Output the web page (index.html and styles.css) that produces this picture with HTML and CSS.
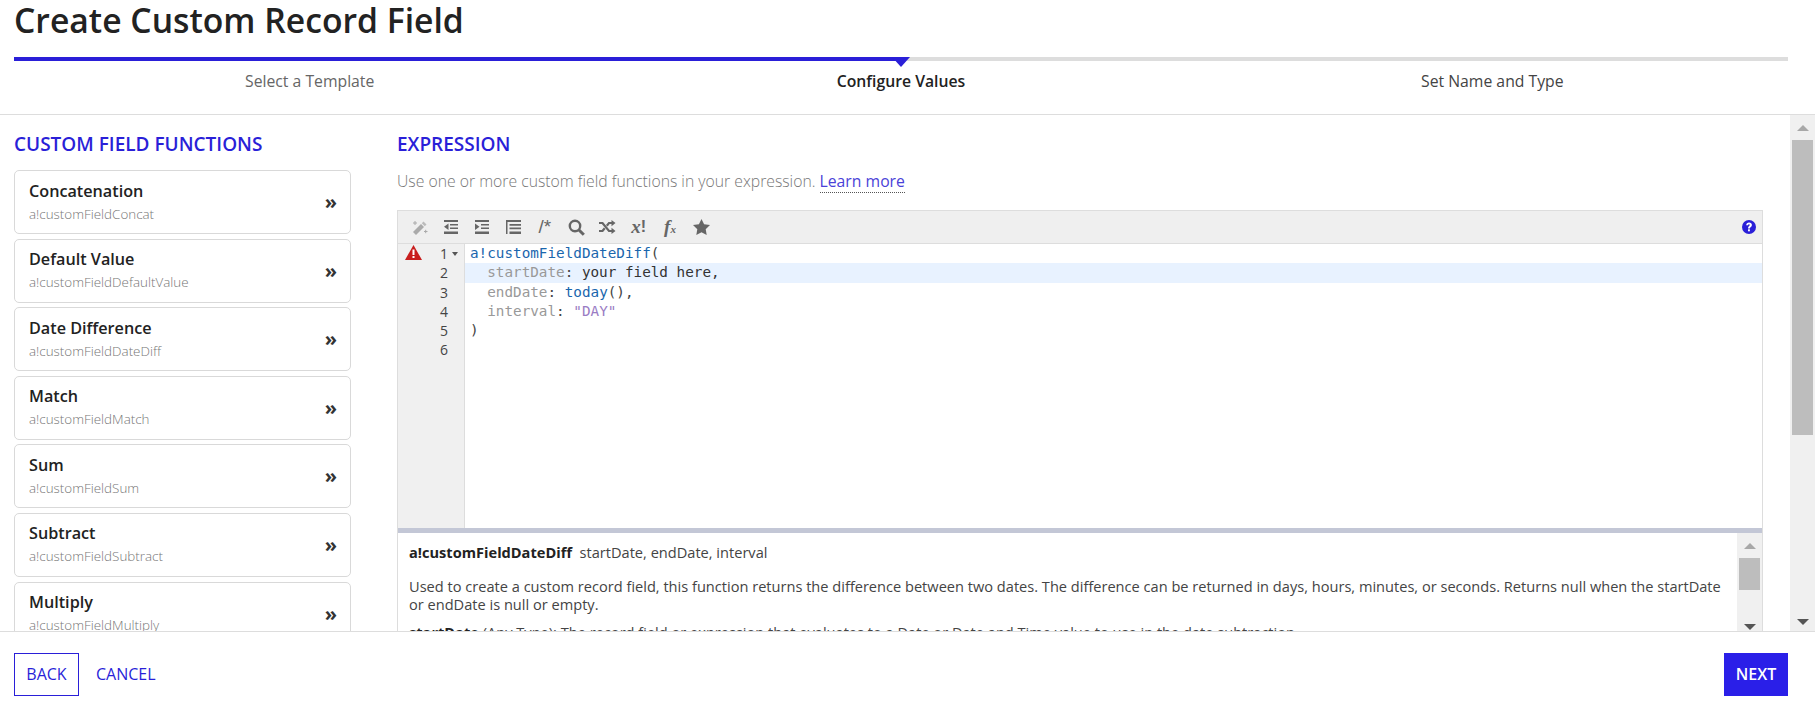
FILE: index.html
```html
<!DOCTYPE html>
<html>
<head>
<meta charset="UTF-8">
<meta name="viewport" content="width=device-width, initial-scale=1.0">
<title>Create Custom Record Field</title>

<link rel="stylesheet" href="styles.css">
</head>

<body>
<div class="page">

<header>
  <h1>Create Custom Record Field</h1>
</header>

<!-- STEPPER -->
<div class="stepper">
  <div class="step done">Select a Template</div>
  <div class="step current">Configure Values</div>
  <div class="step">Set Name and Type</div>
</div>

<div class="content">

  <!-- FUNCTIONS -->
  <div class="functions">
    <h2>CUSTOM FIELD FUNCTIONS</h2>

    <div class="card">
      <div><h3>Concatenation</h3><div class="fn">a!customFieldConcat</div></div>
      <span class="more">»</span>
    </div>
    <div class="card">
      <div><h3>Default Value</h3><div class="fn">a!customFieldDefaultValue</div></div>
      <span class="more">»</span>
    </div>
    <div class="card">
      <div><h3>Date Difference</h3><div class="fn">a!customFieldDateDiff</div></div>
      <span class="more">»</span>
    </div>
    <div class="card">
      <div><h3>Match</h3><div class="fn">a!customFieldMatch</div></div>
      <span class="more">»</span>
    </div>
    <div class="card">
      <div><h3>Sum</h3><div class="fn">a!customFieldSum</div></div>
      <span class="more">»</span>
    </div>
    <div class="card">
      <div><h3>Subtract</h3><div class="fn">a!customFieldSubtract</div></div>
      <span class="more">»</span>
    </div>
    <div class="card">
      <div><h3>Multiply</h3><div class="fn">a!customFieldMultiply</div></div>
      <span class="more">»</span>
    </div>
  </div>

  <!-- EXPRESSION -->
  <div class="expression">
    <h2>EXPRESSION</h2>
    <p class="hint">Use one or more custom field functions in your expression. <a href="#">Learn more</a></p>

    <div class="editor">
      <div class="toolbar">
        <span class="tool">
          <svg width="17" height="17" viewBox="0 0 17 17"><path d="M2 13 10 5l3 3-8 8z" fill="#aaa"/><path d="M10.800 4.200 12.500 2.500l3 3L13.800 7.200z" fill="#bbb"/><path d="M2 4h4M4 2v4M13 12.500h3.500M14.700 10.800v3.400" stroke="#aaa" stroke-width="1"/></svg>
        </span>
        <span class="tool">
          <svg width="14" height="14" viewBox="0 0 14 14"><path d="M0 0h14v2H0zM6 4h8v1.500H6zM6 7.500h8V9H6zM0 11.500h14V14H0zM4.500 3.500v6.500L0 6.700z" fill="#666"/></svg>
        </span>
        <span class="tool">
          <svg width="14" height="14" viewBox="0 0 14 14"><path d="M0 0h14v2H0zM6 4h8v1.500H6zM6 7.500h8V9H6zM0 11.500h14V14H0zM0 3.500v6.500l4.500-3.300z" fill="#666"/></svg>
        </span>
        <span class="tool">
          <svg width="15" height="14" viewBox="0 0 15 14"><path d="M0 0h15v2H0zM0 2h1.500v12H0zM3.500 4H15v1.700H3.500zM3.500 7.500H15v1.700H3.500zM3.500 11.500H15V14H3.500z" fill="#666"/></svg>
        </span>
        <span class="tool comment">/*</span>
        <span class="tool">
          <svg width="17" height="17" viewBox="0 0 17 17"><circle cx="7" cy="7" r="5.200" fill="none" stroke="#666" stroke-width="2.400"/><path d="m10.500 10.500 5.300 5.300" stroke="#666" stroke-width="3"/></svg>
        </span>
        <span class="tool">
          <svg width="17" height="14" viewBox="0 0 17 14"><path d="M0 3h3.500l6.500 8H13M0 11h3.500l2.200-2.700M7.800 5.700 10 3h3" fill="none" stroke="#666" stroke-width="2.200"/><path d="M12.500 0v6.200L16.500 3zM12.500 7.800V14l4-3.100z" fill="#666"/></svg>
        </span>
        <span class="tool math">x<i class="bang">!</i></span>
        <span class="tool math">f<small>x</small></span>
        <span class="tool">
          <svg width="17" height="16" viewBox="0 0 17 16"><path d="m8.500 0 2.600 5.300 5.900.8-4.300 4.100 1 5.800-5.200-2.800L3.300 16l1-5.800L0 6.100l5.900-.8z" fill="#666"/></svg>
        </span>
        <span class="help">
          <svg width="14" height="14" viewBox="0 0 14 14"><circle cx="7" cy="7" r="7" fill="#2a1fd8"/><path d="M4.200 5.300C4.300 3.500 5.500 2.500 7.100 2.500c1.700 0 2.800 1 2.800 2.400 0 2-2 1.900-2 3.500H6c0-2.400 1.800-2.400 1.800-3.400 0-.5-.3-.8-.8-.8s-.8.300-.9 1.100z" fill="#fff"/><rect x="6" y="9.300" width="1.900" height="2" fill="#fff"/></svg>
        </span>
      </div>

      <div class="code-area">
        <div class="gutter">
          <svg class="warn" width="17" height="15" viewBox="0 0 17 15"><path d="M8.500 0 17 15H0z" fill="#c81e1e"/><path d="M7.500 4.500h2v5.500h-2zM7.500 11h2v2h-2z" fill="#fff"/></svg>
          <div class="num fold">1</div>
          <div class="num">2</div>
          <div class="num">3</div>
          <div class="num">4</div>
          <div class="num">5</div>
          <div class="num">6</div>
        </div>
        <div class="code">
          <div class="line"><span class="c-fn">a!customFieldDateDiff</span>(</div>
          <div class="line active">  <span class="c-key">startDate</span>: <span class="c-txt">your field here,</span></div>
          <div class="line">  <span class="c-key">endDate</span>: <span class="c-fn">today</span>(),</div>
          <div class="line">  <span class="c-key">interval</span>: <span class="c-str">"DAY"</span></div>
          <div class="line">)</div>
          <div class="line"></div>
        </div>
      </div>

      <div class="doc">
        <div class="doc-text">
          <p><b>a!customFieldDateDiff</b>&nbsp; startDate, endDate, interval</p>
          <p>Used to create a custom record field, this function returns the difference between two dates. The difference can be returned in days, hours, minutes, or seconds. Returns null when the startDate or endDate is null or empty.</p>
          <p><b>startDate</b> (Any Type): The record field or expression that evaluates to a Date or Date and Time value to use in the date subtraction.</p>
        </div>
        <div class="scrollbar small">
          <span class="arrow up"></span>
          <div class="track"><div class="thumb"></div></div>
          <span class="arrow down"></span>
        </div>
      </div>
    </div>
  </div>

  <div class="scrollbar main-scroll">
    <span class="arrow up"></span>
    <div class="track"><div class="thumb"></div></div>
    <span class="arrow down"></span>
  </div>

</div>

<footer>
  <button class="btn outline">BACK</button>
  <button class="btn link">CANCEL</button>
  <button class="btn primary">NEXT</button>
</footer>

</div>
</body>
</html>
```

FILE: styles.css
```css
*{box-sizing:border-box;}

body{
    margin:0;
    font-family:"Open Sans",sans-serif;
    background:white;
    color:#222;
    overflow:hidden;
}

.page{
    height:100vh;
    display:flex;
    flex-direction:column;
}

header{
    height:57px;
    flex:none;
    padding-left:14px;
}

h1{
    margin:0;
    font-size:33.700px;
    font-weight:600;
    line-height:41px;
    color:#222;
}

/* STEPPER */
.stepper{
    display:flex;
    margin:0 27px 0 14px;
    height:57px;
    flex:none;
}

.step{
    flex:1;
    border-top:4px solid #ddd;
    text-align:center;
    padding-top:9px;
    font-size:15.750px;
    line-height:22px;
    color:#444;
    position:relative;
}

.step.done{border-top-color:#2a1fd8;color:#666;}

.step.current{
    color:#222;
    font-weight:600;
}

.step.current::before{
    content:"";
    position:absolute;
    top:-4px;
    left:0;
    width:50%;
    height:4px;
    background:#2a1fd8;
}

.step.current::after{
    content:"";
    position:absolute;
    top:-4px;
    left:50%;
    margin-left:-9px;
    border-left:9px solid transparent;
    border-right:9px solid transparent;
    border-top:10px solid #2a1fd8;
}

/* MAIN */
.content{
    flex:1;
    min-height:0;
    display:flex;
    border-top:1px solid #ddd;
    border-bottom:1px solid #ddd;
    overflow:hidden;
}

h2{
    margin:0;
    font-size:19px;
    font-weight:600;
    line-height:24px;
    color:#2a1fd8;
}

.functions{
    width:351px;
    flex:none;
    padding:17px 0 0 14px;
}

.functions h2{margin-bottom:14px;}

.card{
    height:64px;
    margin-bottom:4.600px;
    padding:0 13px 2px 14px;
    border:1px solid #d9d9d9;
    border-radius:5px;
    display:flex;
    align-items:center;
    justify-content:space-between;
}

h3{
    margin:0;
    font-size:16.200px;
    font-weight:600;
    line-height:22px;
    color:#222;
}

.fn{
    margin-top:4px;
    font-size:13.400px;
    font-weight:300;
    line-height:17px;
    color:#777;
}

.more{
    font-size:20px;
    font-weight:700;
    line-height:22px;
    margin-top:2px;
    color:#333;
}

.expression{
    width:1366px;
    flex:none;
    margin-left:46px;
    padding-top:17px;
    display:flex;
    flex-direction:column;
}

.hint{
    margin:14px 0 18px;
    font-size:15.750px;
    font-weight:300;
    line-height:22px;
    color:#777;
}

.hint a{
    color:#4a42d8;
    font-weight:400;
    text-decoration:none;
    border-bottom:1px dotted #555;
}

/* EDITOR */
.editor{
    flex:1;
    min-height:0;
    display:flex;
    flex-direction:column;
    border:1px solid #ddd;
    border-bottom:none;
}

.toolbar{
    height:33px;
    flex:none;
    background:#efefef;
    border-bottom:1px solid #ddd;
    display:flex;
    align-items:center;
    padding:0 6px 0 6px;
}

.tool{
    width:31.300px;
    flex:none;
    display:flex;
    justify-content:center;
    align-items:center;
    color:#666;
}

.comment{
    font-size:19px;
    font-family:"Liberation Sans",sans-serif;
    font-weight:400;
}

.math{
    font-family:"Liberation Serif",serif;
    font-style:italic;
    font-weight:700;
    font-size:19px;
}

.bang{
    font-family:"Liberation Sans",sans-serif;
    font-style:normal;
    font-size:16px;
}

.math small{font-size:11px;margin-top:4px;}

.help{
    margin-left:auto;
    display:flex;
}

.code-area{
    flex:1;
    min-height:0;
    display:flex;
}

.gutter{
    width:67px;
    flex:none;
    background:#f0f0f0;
    border-right:1px solid #ddd;
    position:relative;
    padding-right:16px;
}

.warn{
    position:absolute;
    left:7px;
    top:1px;
}

.num{
    height:19.300px;
    line-height:19.300px;
    text-align:right;
    font-size:14px;
    color:#444;
    position:relative;
}

.fold::after{
    content:"";
    position:absolute;
    right:-10px;
    top:8px;
    border-left:3px solid transparent;
    border-right:3px solid transparent;
    border-top:4px solid #555;
}

.code{
    flex:1;
    min-width:0;
    font-family:"DejaVu Sans Mono",monospace;
    font-size:14.300px;
    color:#444;
}

.line{
    height:19.300px;
    line-height:19.300px;
    padding-left:5px;
    white-space:pre;
}

.line.active{background:#e8f2ff;}

.c-fn{color:#1a66ad;}
.c-key{color:#999;}
.c-txt{color:#333;}
.c-str{color:#9a7cc4;}

/* DOC PANEL */
.doc{
    height:103px;
    flex:none;
    display:flex;
    border-top:5px solid #c3c7d6;
    overflow:hidden;
}

.doc-text{
    flex:1;
    min-width:0;
    padding:10px 11px 0;
    font-size:14.600px;
    line-height:18px;
    color:#444;
}

.doc-text p{margin:0 0 10px;}

.doc-text p:first-child{margin-bottom:16px;}

.doc-text b{color:#222;font-weight:700;}

/* SCROLLBARS */
.scrollbar{
    flex:none;
    width:25px;
    background:#f0f0f0;
    display:flex;
    flex-direction:column;
    align-items:center;
}

.track{
    flex:1;
    width:100%;
    padding:0 2px;
}

.thumb{background:#bdbdbd;}

.arrow{
    flex:none;
    width:0;
    height:0;
    border-left:6px solid transparent;
    border-right:6px solid transparent;
}

.arrow.up{border-bottom:6px solid #a8a8a8;}
.arrow.down{border-top:6px solid #555;}

.main-scroll{margin-left:27px;}
.main-scroll .arrow.up{margin:10px 0 9px;}
.main-scroll .arrow.down{margin:0 0 6px;}
.main-scroll .thumb{height:295px;}

.small .arrow.up{margin:10px 0 9px;}
.small .arrow.down{margin:0 0 1px;}
.small .thumb{height:32px;}

/* FOOTER */
footer{
    height:85px;
    flex:none;
    padding:21px 27px 0 14px;
    display:flex;
    align-items:flex-start;
}

.btn{
    height:43px;
    font-family:"Open Sans",sans-serif;
    font-size:16px;
    font-weight:500;
    background:white;
    color:#2a1fd8;
    border:none;
    padding:0 0 2px;
}

.outline{
    width:65px;
    border:1px solid #2a1fd8;
}

.link{margin-left:17px;}

.primary{
    width:64px;
    margin-left:auto;
    background:#2a1fe8;
    color:white;
    font-weight:600;
}
```
